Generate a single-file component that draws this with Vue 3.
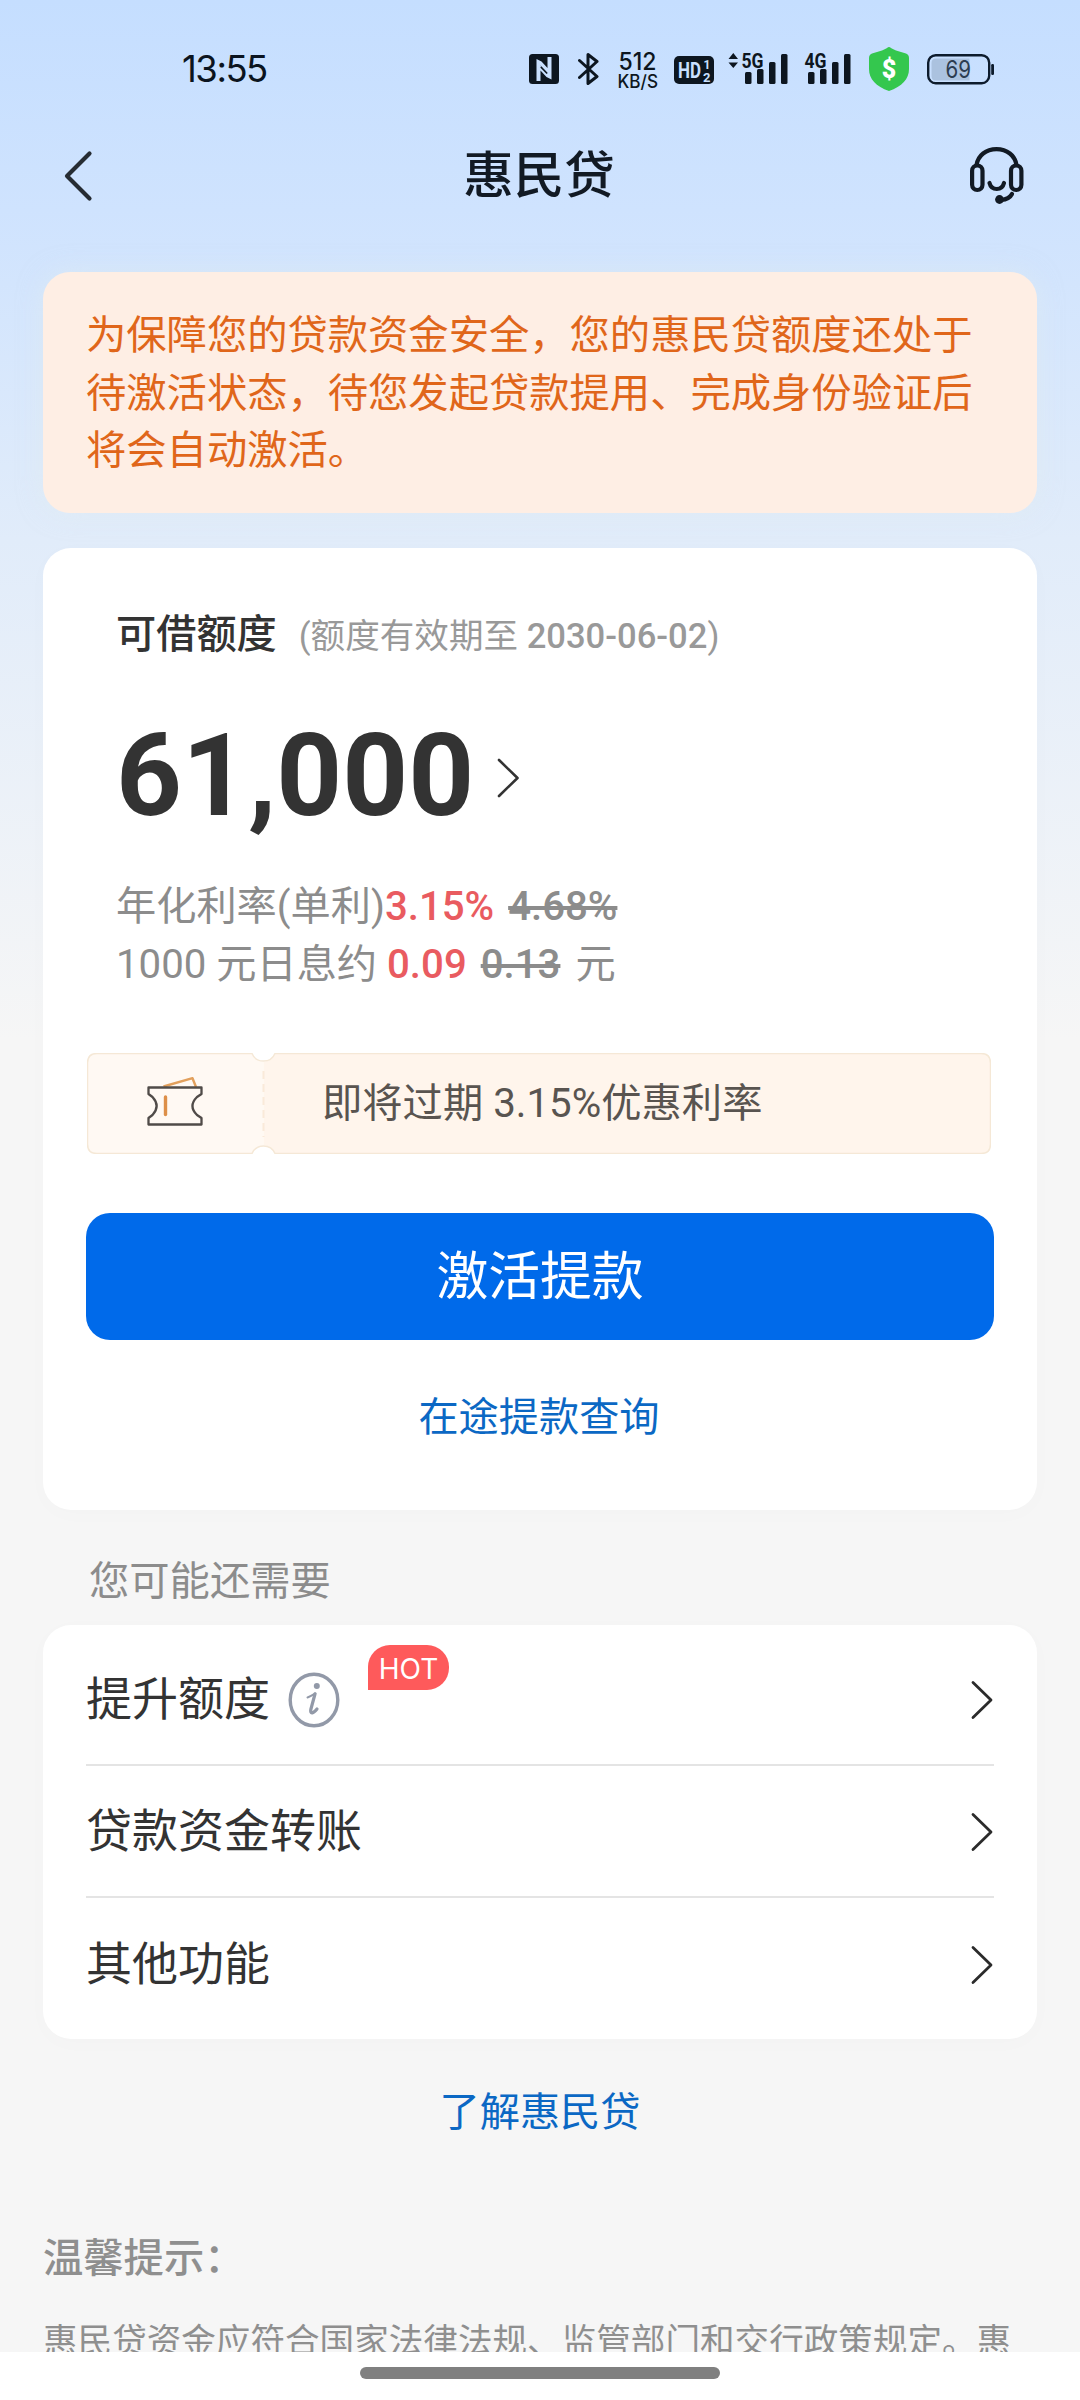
<script setup>
const noticeText = '为保障您的贷款资金安全，您的惠民贷额度还处于待激活状态，待您发起贷款提用、完成身份验证后将会自动激活。'

const menu = [
  { label: '提升额度', info: true, badge: 'HOT' },
  { label: '贷款资金转账' },
  { label: '其他功能' },
]

const signals = [
  { label: '5G', arrows: true },
  { label: '4G', arrows: false },
]
</script>

<template>
  <div class="page">
    <div class="content">
      <header class="status">
        <span class="time">13:55</span>
        <div class="status-icons">
          <!-- NFC -->
          <svg class="nfc" width="30" height="44" viewBox="0 0 30 44">
            <rect x="0" y="7" width="30" height="30" rx="3.500" fill="#0d1620" />
            <path d="M7.500 34V12L12.500 14.500L18.500 21V25.500L11.500 18.500V34ZM22.500 10V32.500L17.500 30L11.500 23.500V19L18.500 25.500V10Z" fill="#c9e0ff" />
            <path d="M11.800 20L18.200 26.500" stroke="#0d1620" stroke-width="1.600" />
          </svg>
          <!-- Bluetooth -->
          <svg class="bt" width="22" height="44" viewBox="0 0 22 44">
            <path d="M1.500 13.500L19 29.500L10 36.500V7.500L19 14.500L1.500 30.500" fill="none" stroke="#0d1620" stroke-width="3" stroke-linejoin="round" stroke-linecap="round" />
          </svg>
          <!-- Network speed -->
          <span class="speed">
            <svg width="42" height="22" viewBox="0 0 42 22">
              <text x="1.500" y="20" font-size="24" font-weight="500" textLength="38" lengthAdjust="spacingAndGlyphs">512</text>
            </svg>
            <svg width="42" height="18" viewBox="0 0 42 18">
              <text x="0.500" y="15.500" font-size="18" font-weight="500" textLength="40.500" lengthAdjust="spacingAndGlyphs">KB/S</text>
            </svg>
          </span>
          <!-- HD voice -->
          <svg class="hd" width="40" height="44" viewBox="0 0 40 44">
            <rect x="0" y="9" width="40" height="28" rx="5" fill="#0d1620" />
            <g fill="#c9e0ff" font-weight="700">
              <text x="4" y="31" font-size="22.500" textLength="23" lengthAdjust="spacingAndGlyphs">HD</text>
              <text x="29.500" y="22" font-size="12">1</text>
              <text x="29" y="34.500" font-size="13">2</text>
            </g>
          </svg>
          <!-- Mobile signals -->
          <svg v-for="s in signals" :key="s.label" :class="['signal', 'signal-' + s.label]" width="60" height="44" viewBox="0 0 60 44">
            <path v-if="s.arrows" d="M0.500 12L5.300 6L10 12ZM0.500 15.500L5.300 21L10 15.500Z" fill="#0d1620" />
            <text x="13.500" y="20.500" font-size="20" font-weight="700" textLength="22" lengthAdjust="spacingAndGlyphs">{{ s.label }}</text>
            <g fill="#0d1620">
              <rect x="17" y="25" width="6.500" height="12" rx="1.500" />
              <rect x="29" y="22" width="6.500" height="15" rx="1.500" />
              <rect x="41" y="15" width="6.500" height="22" rx="1.500" />
              <rect x="53" y="7" width="6.500" height="30" rx="1.500" />
            </g>
          </svg>
          <!-- Security shield -->
          <svg class="shield" width="40" height="44" viewBox="0 0 40 44">
            <path d="M20 0C21 0 23 2 27 3.400L37 6.500Q40 7.500 40 11V22C40 32 33 39.500 20 44C7 39.500 0 32 0 22V11Q0 7.500 3 6.500L13 3.400C17 2 19 0 20 0Z" fill="#34c74e" />
            <text x="20" y="30.500" text-anchor="middle" font-size="25" font-weight="900" class="dollar">$</text>
          </svg>
          <!-- Battery -->
          <svg class="battery" width="68" height="44" viewBox="0 0 68 44">
            <rect x="1.200" y="8.200" width="61" height="28" rx="7.500" fill="none" stroke="#0d1b2c" stroke-width="2.400" />
            <path d="M9 11.500H42.500V33.500H9Q4.500 33.500 4.500 29V16Q4.500 11.500 9 11.500Z" fill="#abc2df" />
            <rect x="64.200" y="17" width="2.800" height="11" rx="1.200" fill="#0d1b2c" />
            <text x="18.500" y="31" font-size="24" textLength="25.500" lengthAdjust="spacingAndGlyphs" class="pct">69</text>
          </svg>
        </div>
      </header>

      <nav class="nav">
        <svg class="back" width="30" height="54" viewBox="0 0 30 54">
          <path d="M26.500 4.500L4 27L26.500 49.500" fill="none" stroke="#262c33" stroke-width="4.200" stroke-linecap="round" stroke-linejoin="round" />
        </svg>
        <h1>惠民贷</h1>
        <svg class="service" width="56" height="58" viewBox="0 0 56 58">
          <g fill="none" stroke="#121a24" stroke-width="4.200" stroke-linecap="round">
            <path d="M7.500 19C9 9.500 17 3.100 27.500 3.100S46 9.500 47.500 19" />
            <rect x="3.100" y="19.500" width="10.400" height="24.500" rx="5.200" />
            <rect x="42" y="19.500" width="10.400" height="24.500" rx="5.200" />
            <path d="M20.500 37C22.500 45 33 45 35 37" />
            <path d="M43 48C41 52 37.500 53.500 32 54" />
          </g>
          <circle cx="30.500" cy="53.500" r="4.400" fill="#121a24" />
        </svg>
      </nav>

      <section class="notice">{{ noticeText }}</section>

      <section class="card quota">
        <div class="quota-head">
          <span class="quota-title">可借额度</span>
          <span class="quota-valid">(额度有效期至 <b>2030-06-02</b>)</span>
        </div>
        <div class="amount">
          <span>61,000</span>
          <svg width="24" height="42" viewBox="0 0 24 42">
            <path d="M2 3L20.500 21L2 39" fill="none" stroke="#333" stroke-width="2.600" stroke-linecap="round" stroke-linejoin="round" />
          </svg>
        </div>
        <div class="rates">
          <p>年化利率(单利)<b class="red">3.15%</b> <s>4.68%</s></p>
          <p>1000 元日息约 <b class="red">0.09</b> <s>0.13</s> <span class="unit">元</span></p>
        </div>

        <div class="coupon">
          <svg class="coupon-bg" width="904" height="101" viewBox="0 0 904 101">
            <path d="M10 .5H165A11 11 0 0 0 176.500 8.500V92.500A11 11 0 0 0 165 100.500H10Q.5 100.500 .5 91V10Q.5 .5 10 .5Z" fill="#fff9f3" />
            <path d="M188 .5H894Q903.500 .5 903.500 10V91Q903.500 100.500 894 100.500H188A11 11 0 0 0 176.500 92.500V8.500A11 11 0 0 0 188 .5Z" fill="#fff5ec" />
            <path d="M10 .5H165A12.500 12.500 0 0 0 188 .5H894Q903.500 .5 903.500 10V91Q903.500 100.500 894 100.500H188A12.500 12.500 0 0 0 165 100.500H10Q.5 100.500 .5 91V10Q.5 .5 10 .5Z" fill="none" stroke="#f5e8d6" stroke-width="1.500" />
            <path d="M176.500 18V84" stroke="#faead9" stroke-width="2" stroke-dasharray="8 5" />
          </svg>
          <svg class="ticket" width="56" height="50" viewBox="0 0 56 50">
            <path d="M16.500 10.500L45.500 2.200L49 11" fill="none" stroke="#e2a05c" stroke-width="2.400" stroke-linejoin="round" />
            <path d="M1.500 11.500H54.500V18L50 21C44 27 44 33 50 39L54.500 42V48.500H1.500V42L5.500 39C11 33 11 27 5.500 21L1.500 18Z" fill="#fff9f3" stroke="#504b48" stroke-width="2.300" stroke-linejoin="round" />
            <path d="M18.500 21V38.500" stroke="#dd8f48" stroke-width="3.400" stroke-linecap="round" />
          </svg>
          <span class="coupon-text">即将过期 3.15%优惠利率</span>
        </div>

        <button class="primary">激活提款</button>
        <a class="link">在途提款查询</a>
      </section>

      <h2 class="section-title">您可能还需要</h2>

      <section class="card menu">
        <div v-for="m in menu" :key="m.label" class="menu-row">
          <span class="menu-label">{{ m.label }}</span>
          <svg v-if="m.info" class="info" width="52" height="56" viewBox="0 0 52 56">
            <ellipse cx="26" cy="28" rx="23.800" ry="25.800" fill="none" stroke="#9299a8" stroke-width="3.400" />
            <circle cx="28.800" cy="14" r="3" fill="#9299a8" />
            <path d="M19.500 25.500C22.500 24.500 25.500 22.500 27.500 21.300" fill="none" stroke="#9299a8" stroke-width="2" stroke-linecap="round" />
            <path d="M27 22L22.800 37.500C21.800 42.500 25.500 41.500 29 37" fill="none" stroke="#9299a8" stroke-width="3.200" stroke-linecap="round" stroke-linejoin="round" />
          </svg>
          <span v-if="m.badge" class="hot">{{ m.badge }}</span>
          <svg class="arrow" width="24" height="42" viewBox="0 0 24 42">
            <path d="M3 3.500L21 21L3 38.500" fill="none" stroke="#2b2b2b" stroke-width="2.800" stroke-linecap="round" stroke-linejoin="round" />
          </svg>
        </div>
      </section>

      <a class="link about">了解惠民贷</a>

      <footer class="tips">
        <h3>温馨提示：</h3>
        <p>惠民贷资金应符合国家法律法规、监管部门和交行政策规定。惠</p>
      </footer>
    </div>
    <div class="home-bar"><i></i></div>
  </div>
</template>

<style>
body {
  margin: 0;
}
</style>

<style scoped>
.page {
  width: 1080px;
  height: 2400px;
  overflow: hidden;
  font-family: Roboto, "Noto Sans CJK SC", sans-serif;
  color: #333;
  background: #fff;
}
.content {
  height: 2352px;
  overflow: hidden;
  display: flex;
  flex-direction: column;
  background: #f6f6f6 linear-gradient(180deg, #c5deff 0, #cfe3fe 210px, #e1ecfa 540px, #f6f6f6 1040px);
}
h1, h2, h3, p {
  margin: 0;
  font-weight: 400;
}
svg {
  display: block;
  flex: none;
}

.status {
  display: flex;
  height: 110px;
  flex: none;
}
.time {
  margin: 47px 0 0 182px;
  width: 90px;
  font-family: Inter, sans-serif;
  font-size: 36.500px;
  line-height: 45px;
  letter-spacing: -1.500px;
  white-space: nowrap;
  color: #0b1420;
}
.status-icons {
  display: flex;
  margin: 47px 0 0 257px;
}
.status-icons text {
  fill: #0d1620;
}
.status-icons .hd text {
  fill: #c9e0ff;
}
.status-icons .dollar {
  fill: #fff;
}
.status-icons .pct {
  fill: #2c3c50;
  font-family: Inter, sans-serif;
}
.bt { margin-left: 19px; }
.speed {
  display: flex;
  flex-direction: column;
  width: 42px;
  margin: 3px 0 0 17px;
  font-family: Inter, sans-serif;
}
.speed svg {
  overflow: visible;
}
.hd { margin-left: 15px; }
.signal-5G { margin-left: 14px; }
.signal-4G { margin-left: 3px; }
.shield { margin-left: 18px; }
.battery { margin-left: 18px; }

.nav {
  display: flex;
  align-items: center;
  justify-content: space-between;
  height: 130px;
  flex: none;
  padding: 1px 55px 0 63px;
  box-sizing: border-box;
}
.nav h1 {
  margin: 1px 0 0 16px;
  font-size: 50.500px;
  line-height: 60px;
  font-weight: 500;
  color: #121a24;
}
.service {
  margin-top: -1px;
}

.notice {
  box-sizing: border-box;
  flex: none;
  height: 241px;
  margin: 32px 43px 0;
  padding: 35px 40px 0 43px;
  border-radius: 27px;
  background: #feeee4;
  box-shadow: 0 0 24px rgba(225, 238, 240, 0.500);
  color: #e0661a;
  font-size: 40.300px;
  line-height: 57.600px;
}

.card {
  box-sizing: border-box;
  flex: none;
  margin: 0 43px;
  padding: 0 43px;
  border-radius: 28px;
  background: #fff;
  box-shadow: 0 4px 24px rgba(0, 0, 0, 0.015);
}
.quota {
  height: 962px;
  margin-top: 35px;
  padding-top: 57px;
  display: flex;
  flex-direction: column;
}
.quota-head {
  display: flex;
  align-items: baseline;
  padding-left: 30px;
  line-height: 60px;
  height: 60px;
}
.quota-title {
  font-size: 40.200px;
  font-weight: 500;
}
.quota-valid {
  margin-left: 22px;
  font-size: 34.600px;
  color: #999;
}
.quota-valid b {
  font-weight: 500;
}
.amount {
  display: flex;
  align-items: center;
  height: 120px;
  margin-top: 51px;
  padding-left: 30px;
  font-size: 115px;
  line-height: 120px;
  font-weight: 700;
}
.amount svg {
  margin: 3px 0 0 23px;
}
.rates {
  margin-top: 42px;
  padding-left: 30px;
  font-size: 40.200px;
  line-height: 57.600px;
  color: #8c8c8c;
}
.rates b,
.rates s {
  font-weight: 500;
}
.rates .red {
  color: #e95b60;
}
.rates s {
  margin-left: 4px;
  text-decoration-thickness: 4px;
}
.unit {
  margin-left: 5px;
}

.coupon {
  position: relative;
  display: flex;
  align-items: center;
  height: 101px;
  width: 904px;
  margin: 60px 0 0 1px;
}
.coupon-bg {
  position: absolute;
  inset: 0;
}
.ticket {
  position: relative;
  margin: -5px 0 0 60px;
}
.coupon-text {
  position: relative;
  margin-left: 119px;
  font-size: 40.300px;
  line-height: 58px;
  color: #595450;
}
.primary {
  height: 127px;
  flex: none;
  margin-top: 59px;
  padding: 0;
  border: 0;
  border-radius: 24px;
  background: #006aea;
  color: #fff;
  font-family: inherit;
  font-size: 51.800px;
  line-height: 129px;
}
.link {
  display: block;
  margin-top: 49px;
  text-align: center;
  font-size: 40.200px;
  line-height: 58px;
  color: #0b68c4;
}
.quota .link {
  margin-right: 2px;
}

.section-title {
  margin: 43px 0 0 89px;
  font-size: 40.300px;
  line-height: 58px;
  color: #8c8c8c;
}
.menu {
  height: 414px;
  margin-top: 14px;
}
.menu-row {
  box-sizing: border-box;
  display: flex;
  align-items: center;
  height: 132px;
  padding-top: 2px;
  border-bottom: 2px solid #e4e4e4;
}
.menu-row:first-child {
  height: 141px;
  padding-top: 10px;
}
.menu-row:last-child {
  border-bottom: 0;
}
.menu-label {
  margin-top: -2px;
  font-size: 46px;
  line-height: 66px;
}
.info {
  margin-left: 18px;
}
.hot {
  width: 81px;
  height: 45px;
  margin: -65px 0 0 28px;
  border-radius: 22px 22px 22px 0;
  background: #fe5a5b;
  color: #fff;
  font-family: Inter, sans-serif;
  font-size: 28px;
  line-height: 48px;
  text-align: center;
}
.arrow {
  margin-left: auto;
}
.about {
  flex: none;
  margin-top: 45px;
}
.tips {
  flex: none;
  margin: 88px 43px 0;
  color: #8f8f8f;
}
.tips h3 {
  font-size: 40.300px;
  line-height: 58px;
  font-weight: 500;
}
.tips p {
  margin-top: 28px;
  font-size: 34.600px;
  line-height: 50px;
  white-space: nowrap;
}
.home-bar {
  display: flex;
  justify-content: center;
  height: 48px;
  background: #fff;
}
.home-bar i {
  width: 360px;
  height: 12px;
  margin-top: 15px;
  border-radius: 6px;
  background: #808080;
}
</style>
